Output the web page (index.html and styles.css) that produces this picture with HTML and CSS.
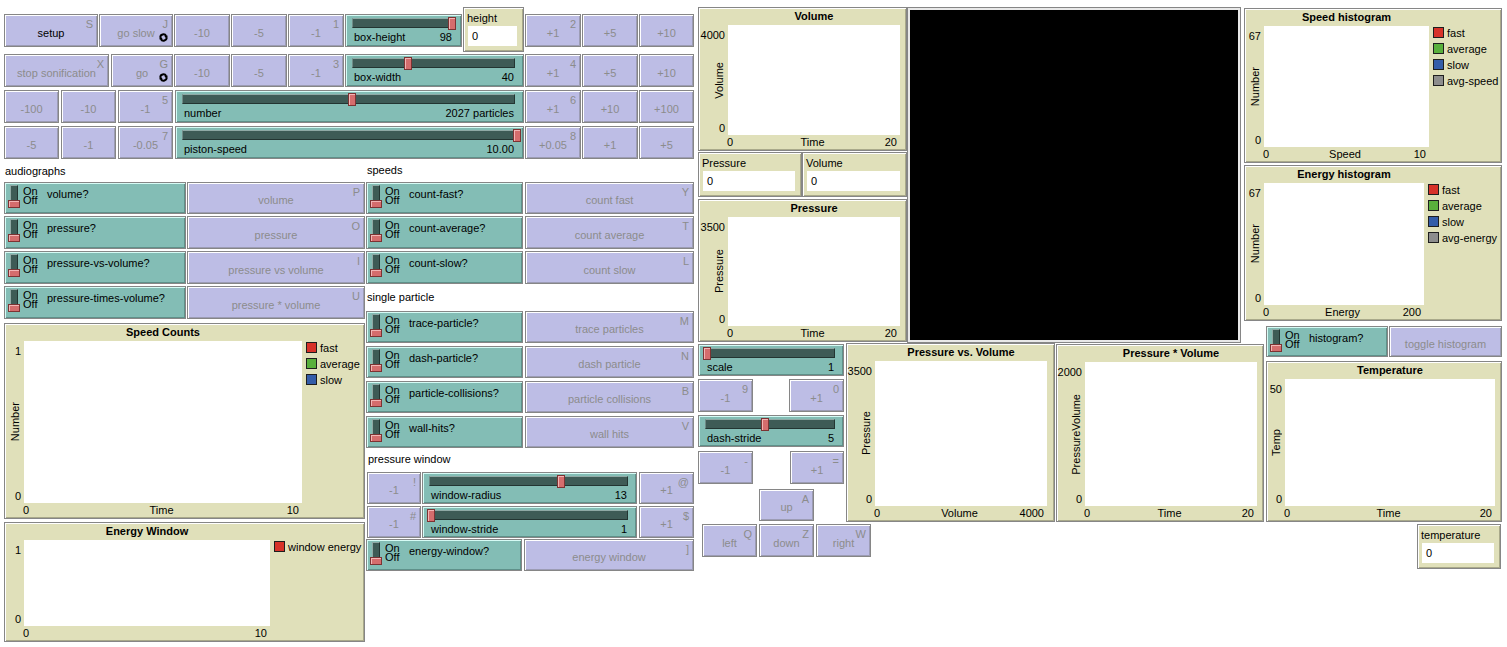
FILE: index.html
```html
<!DOCTYPE html>
<html lang="en">
<head>
<meta charset="utf-8">
<title>GasLab Sonification</title>
<link rel="stylesheet" href="styles.css">
</head>
<body>
<div class="canvas">

  <!-- row 1 -->
  <div class="w btn r1 g-setup"><span class="key">S</span><span class="lbl on">setup</span></div>
  <div class="w btn r1 g-goslow"><span class="key">J</span><span class="lbl">go slow</span><svg class="forever" viewBox="0 0 10 10" width="9" height="9"><path d="M1.4 5.2 A3.5 3.5 0 0 1 8 3.4" fill="none" stroke="#000" stroke-width="2.1"/><path d="M5.8 3 L10 3 L8 6 Z"/><path d="M8.6 4.8 A3.5 3.5 0 0 1 2 6.6" fill="none" stroke="#000" stroke-width="2.1"/><path d="M0 7 L4.2 7 L2 4 Z"/></svg></div>
  <div class="w btn r1 c-m10"><span class="lbl">-10</span></div>
  <div class="w btn r1 c-m5"><span class="lbl">-5</span></div>
  <div class="w btn r1 c-m1"><span class="key">1</span><span class="lbl">-1</span></div>
  <div class="w sl r1 g-boxh"><div class="track"><i class="kn k-boxh"></i></div><div class="srow"><span>box-height</span><span>98</span></div></div>
  <div class="w mon g-height"><span class="mlbl">height</span><span class="mval">0</span></div>
  <div class="w btn r1 c-p1"><span class="key">2</span><span class="lbl">+1</span></div>
  <div class="w btn r1 c-p5"><span class="lbl">+5</span></div>
  <div class="w btn r1 c-p10"><span class="lbl">+10</span></div>

  <!-- row 2 -->
  <div class="w btn r2 g-stop"><span class="key">X</span><span class="lbl">stop sonification</span></div>
  <div class="w btn r2 g-go"><span class="key">G</span><span class="lbl">go</span><svg class="forever" viewBox="0 0 10 10" width="9" height="9"><path d="M1.4 5.2 A3.5 3.5 0 0 1 8 3.4" fill="none" stroke="#000" stroke-width="2.1"/><path d="M5.8 3 L10 3 L8 6 Z"/><path d="M8.6 4.8 A3.5 3.5 0 0 1 2 6.6" fill="none" stroke="#000" stroke-width="2.1"/><path d="M0 7 L4.2 7 L2 4 Z"/></svg></div>
  <div class="w btn r2 c-m10"><span class="lbl">-10</span></div>
  <div class="w btn r2 c-m5"><span class="lbl">-5</span></div>
  <div class="w btn r2 c-m1"><span class="key">3</span><span class="lbl">-1</span></div>
  <div class="w sl r2 g-boxw"><div class="track"><i class="kn k-boxw"></i></div><div class="srow"><span>box-width</span><span>40</span></div></div>
  <div class="w btn r2 c-p1"><span class="key">4</span><span class="lbl">+1</span></div>
  <div class="w btn r2 c-p5"><span class="lbl">+5</span></div>
  <div class="w btn r2 c-p10"><span class="lbl">+10</span></div>

  <!-- row 3 -->
  <div class="w btn r3 c-a"><span class="lbl">-100</span></div>
  <div class="w btn r3 c-b"><span class="lbl">-10</span></div>
  <div class="w btn r3 c-c"><span class="key">5</span><span class="lbl">-1</span></div>
  <div class="w sl r3 c-sl"><div class="track"><i class="kn k-num"></i></div><div class="srow"><span>number</span><span>2027 particles</span></div></div>
  <div class="w btn r3 c-p1"><span class="key">6</span><span class="lbl">+1</span></div>
  <div class="w btn r3 c-p5"><span class="lbl">+10</span></div>
  <div class="w btn r3 c-p10"><span class="lbl">+100</span></div>

  <!-- row 4 -->
  <div class="w btn r4 c-a"><span class="lbl">-5</span></div>
  <div class="w btn r4 c-b"><span class="lbl">-1</span></div>
  <div class="w btn r4 c-c"><span class="key">7</span><span class="lbl">-0.05</span></div>
  <div class="w sl r4 c-sl"><div class="track"><i class="kn k-piston"></i></div><div class="srow"><span>piston-speed</span><span>10.00</span></div></div>
  <div class="w btn r4 c-p1"><span class="key">8</span><span class="lbl">+0.05</span></div>
  <div class="w btn r4 c-p5"><span class="lbl">+1</span></div>
  <div class="w btn r4 c-p10"><span class="lbl">+5</span></div>

  <!-- audiographs -->
  <div class="w note n-audio">audiographs</div>
  <div class="w sw s1 la"><span class="tog"><i class="bar"></i><i class="knob"></i></span><span class="onoff">On<br>Off</span><span class="slbl">volume?</span></div>
  <div class="w btn s1 lb"><span class="key">P</span><span class="lbl">volume</span></div>
  <div class="w sw s2 la"><span class="tog"><i class="bar"></i><i class="knob"></i></span><span class="onoff">On<br>Off</span><span class="slbl">pressure?</span></div>
  <div class="w btn s2 lb"><span class="key">O</span><span class="lbl">pressure</span></div>
  <div class="w sw s3 la"><span class="tog"><i class="bar"></i><i class="knob"></i></span><span class="onoff">On<br>Off</span><span class="slbl">pressure-vs-volume?</span></div>
  <div class="w btn s3 lb"><span class="key">I</span><span class="lbl">pressure vs volume</span></div>
  <div class="w sw s4 la"><span class="tog"><i class="bar"></i><i class="knob"></i></span><span class="onoff">On<br>Off</span><span class="slbl">pressure-times-volume?</span></div>
  <div class="w btn s4 lb"><span class="key">U</span><span class="lbl">pressure * volume</span></div>

  <!-- speeds -->
  <div class="w note n-speeds">speeds</div>
  <div class="w sw s1 ma"><span class="tog"><i class="bar"></i><i class="knob"></i></span><span class="onoff">On<br>Off</span><span class="slbl">count-fast?</span></div>
  <div class="w btn s1 mb"><span class="key">Y</span><span class="lbl">count fast</span></div>
  <div class="w sw s2 ma"><span class="tog"><i class="bar"></i><i class="knob"></i></span><span class="onoff">On<br>Off</span><span class="slbl">count-average?</span></div>
  <div class="w btn s2 mb"><span class="key">T</span><span class="lbl">count average</span></div>
  <div class="w sw s3 ma"><span class="tog"><i class="bar"></i><i class="knob"></i></span><span class="onoff">On<br>Off</span><span class="slbl">count-slow?</span></div>
  <div class="w btn s3 mb"><span class="key">L</span><span class="lbl">count slow</span></div>

  <!-- single particle -->
  <div class="w note n-single">single particle</div>
  <div class="w sw t1 ma"><span class="tog"><i class="bar"></i><i class="knob"></i></span><span class="onoff">On<br>Off</span><span class="slbl">trace-particle?</span></div>
  <div class="w btn t1 mb"><span class="key">M</span><span class="lbl">trace particles</span></div>
  <div class="w sw t2 ma"><span class="tog"><i class="bar"></i><i class="knob"></i></span><span class="onoff">On<br>Off</span><span class="slbl">dash-particle?</span></div>
  <div class="w btn t2 mb"><span class="key">N</span><span class="lbl">dash particle</span></div>
  <div class="w sw t3 ma"><span class="tog"><i class="bar"></i><i class="knob"></i></span><span class="onoff">On<br>Off</span><span class="slbl">particle-collisions?</span></div>
  <div class="w btn t3 mb"><span class="key">B</span><span class="lbl">particle collisions</span></div>
  <div class="w sw t4 ma"><span class="tog"><i class="bar"></i><i class="knob"></i></span><span class="onoff">On<br>Off</span><span class="slbl">wall-hits?</span></div>
  <div class="w btn t4 mb"><span class="key">V</span><span class="lbl">wall hits</span></div>

  <!-- pressure window -->
  <div class="w note n-pwin">pressure window</div>
  <div class="w btn u1 pa"><span class="key">!</span><span class="lbl">-1</span></div>
  <div class="w sl u1 pb"><div class="track"><i class="kn k-wrad"></i></div><div class="srow"><span>window-radius</span><span>13</span></div></div>
  <div class="w btn u1 pc"><span class="key">@</span><span class="lbl">+1</span></div>
  <div class="w btn u2 pa"><span class="key">#</span><span class="lbl">-1</span></div>
  <div class="w sl u2 pb"><div class="track"><i class="kn k-min"></i></div><div class="srow"><span>window-stride</span><span>1</span></div></div>
  <div class="w btn u2 pc"><span class="key">$</span><span class="lbl">+1</span></div>
  <div class="w sw g-ewsw"><span class="tog"><i class="bar"></i><i class="knob"></i></span><span class="onoff">On<br>Off</span><span class="slbl">energy-window?</span></div>
  <div class="w btn g-ewbtn"><span class="key">]</span><span class="lbl">energy window</span></div>

  <!-- left plots -->
  <div class="w plot g-sc">
    <div class="p-title">Speed Counts</div>
    <div class="p-y"><span class="p-ymax">1</span><span class="p-ylabel">Number</span><span class="p-ymin">0</span></div>
    <div class="p-area"></div>
    <div class="p-legend"><div class="lg"><i class="swt red"></i>fast</div><div class="lg"><i class="swt green"></i>average</div><div class="lg"><i class="swt blue"></i>slow</div></div>
    <div class="p-x"><span class="xl">0</span><span>Time</span><span class="xr">10</span></div>
  </div>
  <div class="w plot g-ew">
    <div class="p-title">Energy Window</div>
    <div class="p-y"><span class="p-ymax">1</span><span class="p-ymin">0</span></div>
    <div class="p-area"></div>
    <div class="p-legend"><div class="lg"><i class="swt red"></i>window energy</div></div>
    <div class="p-x"><span class="xl">0</span><span></span><span class="xr">10</span></div>
  </div>

  <!-- middle plots & monitors -->
  <div class="w plot g-vol">
    <div class="p-title">Volume</div>
    <div class="p-y"><span class="p-ymax">4000</span><span class="p-ylabel">Volume</span><span class="p-ymin">0</span></div>
    <div class="p-area"></div>
    <div class="p-x"><span class="xl">0</span><span>Time</span><span class="xr">20</span></div>
  </div>
  <div class="w mon g-pmon"><span class="mlbl">Pressure</span><span class="mval">0</span></div>
  <div class="w mon g-vmon"><span class="mlbl">Volume</span><span class="mval">0</span></div>
  <div class="w plot g-pr">
    <div class="p-title">Pressure</div>
    <div class="p-y"><span class="p-ymax">3500</span><span class="p-ylabel">Pressure</span><span class="p-ymin">0</span></div>
    <div class="p-area"></div>
    <div class="p-x"><span class="xl">0</span><span>Time</span><span class="xr">20</span></div>
  </div>

  <!-- world view -->
  <div class="w view"><div class="world"></div></div>

  <!-- right histograms -->
  <div class="w plot g-sh">
    <div class="p-title">Speed histogram</div>
    <div class="p-y"><span class="p-ymax">67</span><span class="p-ylabel">Number</span><span class="p-ymin">0</span></div>
    <div class="p-area"></div>
    <div class="p-legend"><div class="lg"><i class="swt red"></i>fast</div><div class="lg"><i class="swt green"></i>average</div><div class="lg"><i class="swt blue"></i>slow</div><div class="lg"><i class="swt gray"></i>avg-speed</div></div>
    <div class="p-x"><span class="xl">0</span><span>Speed</span><span class="xr">10</span></div>
  </div>
  <div class="w plot g-eh">
    <div class="p-title">Energy histogram</div>
    <div class="p-y"><span class="p-ymax">67</span><span class="p-ylabel">Number</span><span class="p-ymin">0</span></div>
    <div class="p-area"></div>
    <div class="p-legend"><div class="lg"><i class="swt red"></i>fast</div><div class="lg"><i class="swt green"></i>average</div><div class="lg"><i class="swt blue"></i>slow</div><div class="lg"><i class="swt gray"></i>avg-energy</div></div>
    <div class="p-x"><span class="xl">0</span><span>Energy</span><span class="xr">200</span></div>
  </div>
  <div class="w sw g-hsw"><span class="tog"><i class="bar"></i><i class="knob"></i></span><span class="onoff">On<br>Off</span><span class="slbl">histogram?</span></div>
  <div class="w btn g-hbtn"><span class="lbl">toggle histogram</span></div>
  <div class="w plot g-tp">
    <div class="p-title">Temperature</div>
    <div class="p-y"><span class="p-ymax">50</span><span class="p-ylabel">Temp</span><span class="p-ymin">0</span></div>
    <div class="p-area"></div>
    <div class="p-x"><span class="xl">0</span><span>Time</span><span class="xr">20</span></div>
  </div>
  <div class="w mon g-tmon"><span class="mlbl">temperature</span><span class="mval">0</span></div>

  <!-- lower middle -->
  <div class="w sl g-scale"><div class="track"><i class="kn k-min"></i></div><div class="srow"><span>scale</span><span>1</span></div></div>
  <div class="w btn g-m9"><span class="key">9</span><span class="lbl">-1</span></div>
  <div class="w btn g-p0"><span class="key">0</span><span class="lbl">+1</span></div>
  <div class="w sl g-dash"><div class="track"><i class="kn k-dash"></i></div><div class="srow"><span>dash-stride</span><span>5</span></div></div>
  <div class="w btn g-mminus"><span class="key">-</span><span class="lbl">-1</span></div>
  <div class="w btn g-peq"><span class="key">=</span><span class="lbl">+1</span></div>
  <div class="w btn g-up"><span class="key">A</span><span class="lbl">up</span></div>
  <div class="w btn g-left"><span class="key">Q</span><span class="lbl">left</span></div>
  <div class="w btn g-down"><span class="key">Z</span><span class="lbl">down</span></div>
  <div class="w btn g-right"><span class="key">W</span><span class="lbl">right</span></div>

  <div class="w plot g-pvv">
    <div class="p-title">Pressure vs. Volume</div>
    <div class="p-y"><span class="p-ymax">3500</span><span class="p-ylabel">Pressure</span><span class="p-ymin">0</span></div>
    <div class="p-area"></div>
    <div class="p-x"><span class="xl">0</span><span>Volume</span><span class="xr">4000</span></div>
  </div>
  <div class="w plot g-ptv">
    <div class="p-title">Pressure * Volume</div>
    <div class="p-y"><span class="p-ymax">2000</span><span class="p-ylabel">PressureVolume</span><span class="p-ymin">0</span></div>
    <div class="p-area"></div>
    <div class="p-x"><span class="xl">0</span><span>Time</span><span class="xr">20</span></div>
  </div>

</div>
</body>
</html>
```

FILE: styles.css
```css
* { box-sizing: border-box; }

body {
  margin: 0;
  background: #ffffff;
  font-family: "Liberation Sans", Arial, sans-serif;
  font-size: 11px;
  color: #000;
}

/* the NetLogo interface is a free canvas: every widget sits at its model coordinates */
.canvas {
  position: relative;
  width: 1507px;
  height: 647px;
  overflow: hidden;
}
.w { position: absolute; }

/* ---------- buttons ---------- */
.btn {
  display: grid;
  background: #bdbde5;
  border: 1px solid #868686;
  box-shadow: inset 1px 1px 0 #ffffff, inset -1px -1px 0 #9c9cb4;
}
.btn > * { grid-area: 1 / 1; }
.btn .key {
  justify-self: end;
  align-self: start;
  padding: 3px 4px 0 0;
  line-height: 13px;
  color: #8c8c8c;
}
.btn .lbl {
  justify-self: center;
  align-self: center;
  padding-top: 5px;
  line-height: 13px;
  white-space: nowrap;
  color: #8c8c8c;
}
.btn .lbl.on { color: #000; }
.btn .forever {
  justify-self: end;
  align-self: end;
  margin: 0 4px 4px 0;
}

/* ---------- sliders ---------- */
.sl {
  display: flex;
  flex-direction: column;
  background: #83bdb5;
  border: 1px solid #868686;
  box-shadow: inset 1px 1px 0 #d6fbf5, inset -1px -1px 0 #5f918a;
}
.track {
  position: relative;
  height: 10px;
  margin: 3px 8px 0 6px;
  background: #3e5b56;
  border: 1px solid #233532;
  border-top-color: #8fa9a5;
  border-left-color: #6f8b87;
}
.kn {
  position: absolute;
  top: -2px;
  width: 8px;
  height: 13px;
  background: #d56d6d;
  border: 1px solid #7c3333;
  box-shadow: inset 1px 1px 0 #f3b5b5;
}
.k-boxh { left: 95px; }
.k-boxw { left: 51px; }
.k-num { left: 165px; }
.k-piston { left: 330px; }
.k-wrad { left: 127px; }
.k-min { left: -3px; }
.k-dash { left: 55px; }
.srow {
  display: flex;
  justify-content: space-between;
  margin: 3px 9px 0 8px;
  line-height: 13px;
  white-space: nowrap;
}

/* ---------- switches ---------- */
.sw {
  display: flex;
  align-items: flex-start;
  background: #83bdb5;
  border: 1px solid #868686;
  box-shadow: inset 1px 1px 0 #d6fbf5, inset -1px -1px 0 #5f918a;
}
.tog {
  display: flex;
  flex-direction: column;
  align-items: center;
  width: 12px;
  margin: 2px 0 0 3px;
}
.bar {
  width: 8px;
  height: 18px;
  background: #3e5b56;
  border: 1px solid #233532;
  border-left-color: #8fa9a5;
  border-top-color: #8fa9a5;
}
.knob {
  width: 12px;
  height: 8px;
  margin-top: -3px;
  background: #d56d6d;
  border: 1px solid #7c3333;
  box-shadow: inset 1px 1px 0 #f3b5b5;
}
.onoff {
  width: 24px;
  margin: 4px 0 0 3px;
  line-height: 9px;
}
.slbl {
  margin-top: 5px;
  line-height: 13px;
  white-space: nowrap;
}

/* ---------- monitors ---------- */
.mon {
  display: flex;
  flex-direction: column;
  background: #e0e0ba;
  border: 1px solid #868686;
  box-shadow: inset 1px 1px 0 #ffffff, inset -1px -1px 0 #a9a98a;
}
.mlbl {
  padding: 4px 0 0 3px;
  line-height: 13px;
  white-space: nowrap;
}
.mval {
  height: 20px;
  margin: 1px 6px 5px 4px;
  padding-left: 4px;
  line-height: 20px;
  background: #ffffff;
}

/* ---------- notes ---------- */
.note { line-height: 13px; white-space: nowrap; }
.n-audio { left: 5px; top: 165px; }
.n-speeds { left: 367px; top: 164px; }
.n-single { left: 367px; top: 291px; }
.n-pwin { left: 368px; top: 453px; }

/* ---------- plots ---------- */
.plot {
  display: grid;
  grid-template-columns: var(--yl) 1fr var(--lg);
  grid-template-rows: 17px 1fr 15px;
  background: #e0e0ba;
  border: 1px solid #868686;
  box-shadow: inset 1px 1px 0 #ffffff, inset -1px -1px 0 #a9a98a;
}
.p-title {
  grid-column: 2;
  grid-row: 1;
  justify-self: center;
  padding-top: 2px;
  line-height: 13px;
  font-weight: bold;
  white-space: nowrap;
}
.p-y {
  grid-column: 1;
  grid-row: 2;
  display: grid;
  grid-template-columns: 100%;
  grid-template-rows: auto 1fr auto;
  justify-items: end;
}
.p-ymax { grid-column: 1; grid-row: 1; padding: 4px 3px 0 0; line-height: 13px; }
.p-ymin { grid-column: 1; grid-row: 3; padding-right: 3px; line-height: 13px; }
.p-ylabel {
  grid-column: 1;
  grid-row: 1 / 4;
  align-self: center;
  margin-right: 2px;
  writing-mode: vertical-rl;
  transform: rotate(180deg);
  line-height: 13px;
  white-space: nowrap;
}
.p-area { grid-column: 2; grid-row: 2; background: #ffffff; }
.p-x {
  grid-column: 2;
  grid-row: 3;
  display: grid;
  grid-template-columns: 1fr auto 1fr;
  padding: 1px 3px 0 0;
  line-height: 13px;
  white-space: nowrap;
}
.p-x .xl { margin-left: -1px; }
.p-x .xr { justify-self: end; }
.p-legend {
  grid-column: 3;
  grid-row: 2 / 4;
  padding: 0 0 0 4px;
}
.lg {
  display: flex;
  align-items: center;
  gap: 3px;
  height: 13px;
  margin-bottom: 3px;
  white-space: nowrap;
}
.swt {
  flex: none;
  width: 11px;
  height: 11px;
  border: 1px solid #1e1e1e;
}
.red { background: #d73229; }
.green { background: #59b03c; }
.blue { background: #345da9; }
.gray { background: #8d8d8d; }

/* ---------- world view ---------- */
.view {
  left: 907px; top: 7px; width: 334px; height: 336px;
  display: flex;
  padding: 2px;
  background: #e8e8e8;
  border: 1px solid #868686;
}
.world { flex: 1; background: #000000; }

/* ---------- geometry (model coordinates) ---------- */
.r1 { top: 14px; height: 33px; }
.r2 { top: 54px; height: 33px; }
.r3 { top: 90px; height: 33px; }
.r4 { top: 126px; height: 33px; }

.g-setup { left: 4px; width: 94px; }
.g-goslow { left: 99px; width: 74px; }
.g-stop { left: 4px; width: 105px; }
.g-go { left: 111px; width: 62px; }
.c-m10 { left: 174px; width: 56px; }
.c-m5 { left: 231px; width: 56px; }
.c-m1 { left: 288px; width: 56px; }
.g-boxh { left: 345px; width: 117px; }
.g-boxw { left: 345px; width: 179px; }
.g-height { left: 463px; top: 7px; width: 61px; height: 45px; }
.c-p1 { left: 525px; width: 56px; }
.c-p5 { left: 582px; width: 56px; }
.c-p10 { left: 639px; width: 55px; }
.c-a { left: 4px; width: 55px; }
.c-b { left: 61px; width: 55px; }
.c-c { left: 118px; width: 55px; }
.c-sl { left: 175px; width: 349px; }

.s1 { top: 182px; height: 32px; }
.s2 { top: 216px; height: 33px; }
.s3 { top: 251px; height: 33px; }
.s4 { top: 286px; height: 33px; }
.t1 { top: 311px; height: 32px; }
.t2 { top: 346px; height: 32px; }
.t3 { top: 381px; height: 32px; }
.t4 { top: 416px; height: 32px; }
.la { left: 4px; width: 182px; }
.lb { left: 187px; width: 178px; }
.ma { left: 366px; width: 157px; }
.mb { left: 525px; width: 169px; }

.u1 { top: 472px; height: 32px; }
.u2 { top: 506px; height: 32px; }
.pa { left: 367px; width: 54px; }
.pb { left: 422px; width: 215px; }
.pc { left: 639px; width: 55px; }
.g-ewsw { left: 366px; top: 539px; width: 156px; height: 32px; }
.g-ewbtn { left: 524px; top: 539px; width: 170px; height: 32px; }

.g-sc { left: 4px; top: 323px; width: 361px; height: 196px; --yl: 19px; --lg: 62px; }
.g-ew { left: 4px; top: 522px; width: 361px; height: 120px; --yl: 19px; --lg: 94px; }
.g-vol { left: 698px; top: 7px; width: 209px; height: 144px; --yl: 29px; --lg: 6px; }
.g-pr { left: 698px; top: 199px; width: 209px; height: 143px; --yl: 29px; --lg: 6px; }
.g-pmon { left: 698px; top: 152px; width: 104px; height: 45px; }
.g-vmon { left: 802px; top: 152px; width: 105px; height: 45px; }
.g-sh { left: 1244px; top: 8px; width: 258px; height: 155px; --yl: 19px; --lg: 72px; }
.g-eh { left: 1244px; top: 165px; width: 258px; height: 156px; --yl: 19px; --lg: 77px; }
.g-hsw { left: 1266px; top: 326px; width: 122px; height: 31px; }
.g-hbtn { left: 1389px; top: 326px; width: 113px; height: 31px; }
.g-tp { left: 1266px; top: 361px; width: 236px; height: 161px; --yl: 18px; --lg: 6px; }
.g-tmon { left: 1417px; top: 524px; width: 84px; height: 45px; }
.g-pvv { left: 846px; top: 343px; width: 209px; height: 179px; --yl: 28px; --lg: 7px; }
.g-ptv { left: 1056px; top: 344px; width: 208px; height: 178px; --yl: 28px; --lg: 6px; }

.g-scale { left: 698px; top: 344px; width: 146px; height: 32px; }
.g-m9 { left: 698px; top: 379px; width: 55px; height: 33px; }
.g-p0 { left: 789px; top: 379px; width: 55px; height: 33px; }
.g-dash { left: 698px; top: 415px; width: 146px; height: 32px; }
.g-mminus { left: 698px; top: 451px; width: 55px; height: 33px; }
.g-peq { left: 790px; top: 451px; width: 54px; height: 33px; }
.g-up { left: 759px; top: 489px; width: 55px; height: 32px; }
.g-left { left: 702px; top: 524px; width: 55px; height: 33px; }
.g-down { left: 759px; top: 524px; width: 55px; height: 33px; }
.g-right { left: 816px; top: 524px; width: 55px; height: 33px; }
```
